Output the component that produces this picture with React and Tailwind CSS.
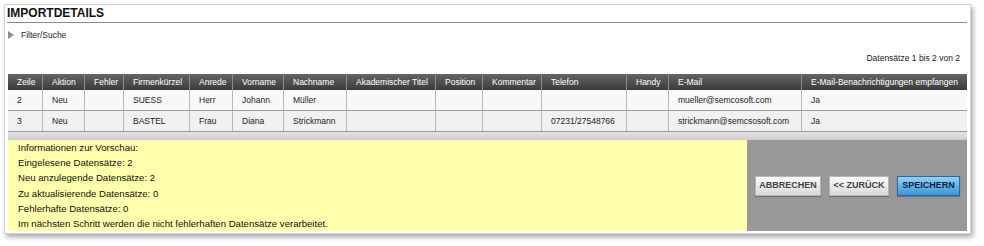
import React from "react";

const cols = "grid-cols-[35px_42px_39px_66px_43px_51px_63px_89px_47px_59px_85px_42px_133px_165px]";

const headers = [
  "Zeile", "Aktion", "Fehler", "Firmenkürzel", "Anrede", "Vorname", "Nachname",
  "Akademischer Titel", "Position", "Kommentar", "Telefon", "Handy", "E-Mail",
  "E-Mail-Benachrichtigungen empfangen",
];

const rows = [
  ["2", "Neu", "", "SUESS", "Herr", "Johann", "Müller", "", "", "", "", "", "mueller@semcosoft.com", "Ja"],
  ["3", "Neu", "", "BASTEL", "Frau", "Diana", "Strickmann", "", "", "", "07231/27548766", "", "strickmann@semcsosoft.com", "Ja"],
];

const info = [
  "Informationen zur Vorschau:",
  "Eingelesene Datensätze: 2",
  "Neu anzulegende Datensätze: 2",
  "Zu aktualisierende Datensätze: 0",
  "Fehlerhafte Datensätze: 0",
  "Im nächsten Schritt werden die nicht fehlerhaften Datensätze verarbeitet.",
];

export default function App() {
  return (
    <div
      className="w-[984px] h-[246px] bg-white pt-[4px] pl-[4px] overflow-hidden"
      style={{ fontFamily: '"Liberation Sans", Arial, sans-serif' }}
    >
      <div className="w-[967px] border border-[#d4d4d4] bg-white px-[3px] pb-[2px] shadow-[2px_3px_5px_rgba(0,0,0,0.35)]">
        <div className="h-[18px] border-b border-[#8a8a8a] text-[12px] font-bold leading-[17px] text-[#111] -ml-[1px]">
          IMPORTDETAILS
        </div>
        <div className="h-[24px] flex items-center gap-[7px] text-[8.5px] text-[#222]">
          <svg width="6" height="8" viewBox="0 0 6 8">
            <polygon points="0,0 6,4 0,8" fill="#8c8c8c" />
          </svg>
          <span>Filter/Suche</span>
        </div>
        <div className="h-[22px] leading-[22px] text-right pr-[7px] text-[8.5px] text-[#222]">
          Datensätze 1 bis 2 von 2
        </div>
        <div className="mt-[5px]">
          <div className={`grid ${cols} h-[16px] bg-gradient-to-b from-[#646666] to-[#3a3c3c] text-white text-[8.5px] leading-[16px]`}>
            {headers.map((h, i) => (
              <div
                key={i}
                className={`px-[9px] whitespace-nowrap overflow-hidden ${i < headers.length - 1 ? "border-r border-[#8a8a8a]" : ""}`}
              >
                {h}
              </div>
            ))}
          </div>
          {rows.map((r, ri) => (
            <div
              key={ri}
              className={`grid ${cols} h-[21px] border-b border-[#9a9a9a] text-[8.5px] leading-[20px] text-[#222] ${ri === 0 ? "bg-[#f8f8f8]" : "bg-[#f1f1f1]"}`}
            >
              {r.map((c, ci) => (
                <div
                  key={ci}
                  className={`px-[9px] whitespace-nowrap overflow-hidden ${ci < r.length - 1 ? "border-r border-[#b8b8b8]" : ""}`}
                >
                  {c}
                </div>
              ))}
            </div>
          ))}
          <div className="h-[8px] bg-gradient-to-b from-[#e4e4e4] to-[#cdcdcd]" />
        </div>
        <div className="flex h-[91px]">
          <div className="w-[739px] bg-[#ffffac] pl-[10px] text-[9.6px] leading-[15.2px] text-[#111]">
            {info.map((t, i) => (
              <div key={i}>{t}</div>
            ))}
          </div>
          <div className="flex-1 bg-[#999999] flex items-center justify-end gap-[8px] pr-[7px]">
            <button className="h-[20px] w-[66px] border border-[#b5b5b5] bg-gradient-to-b from-[#fbfbfb] to-[#dadada] text-[9px] font-bold text-[#444] shadow-[0_1px_1px_rgba(0,0,0,0.25)]">
              ABBRECHEN
            </button>
            <button className="h-[20px] w-[60px] border border-[#b5b5b5] bg-gradient-to-b from-[#fbfbfb] to-[#dadada] text-[9px] font-bold text-[#444] shadow-[0_1px_1px_rgba(0,0,0,0.25)]">
              &lt;&lt; ZURÜCK
            </button>
            <button className="h-[20px] w-[63px] border border-[#2a68a0] bg-gradient-to-b from-[#8fd1f8] to-[#3995dc] text-[9px] font-bold text-[#0c2340] shadow-[0_1px_1px_rgba(0,0,0,0.25)]">
              SPEICHERN
            </button>
          </div>
        </div>
      </div>
    </div>
  );
}
